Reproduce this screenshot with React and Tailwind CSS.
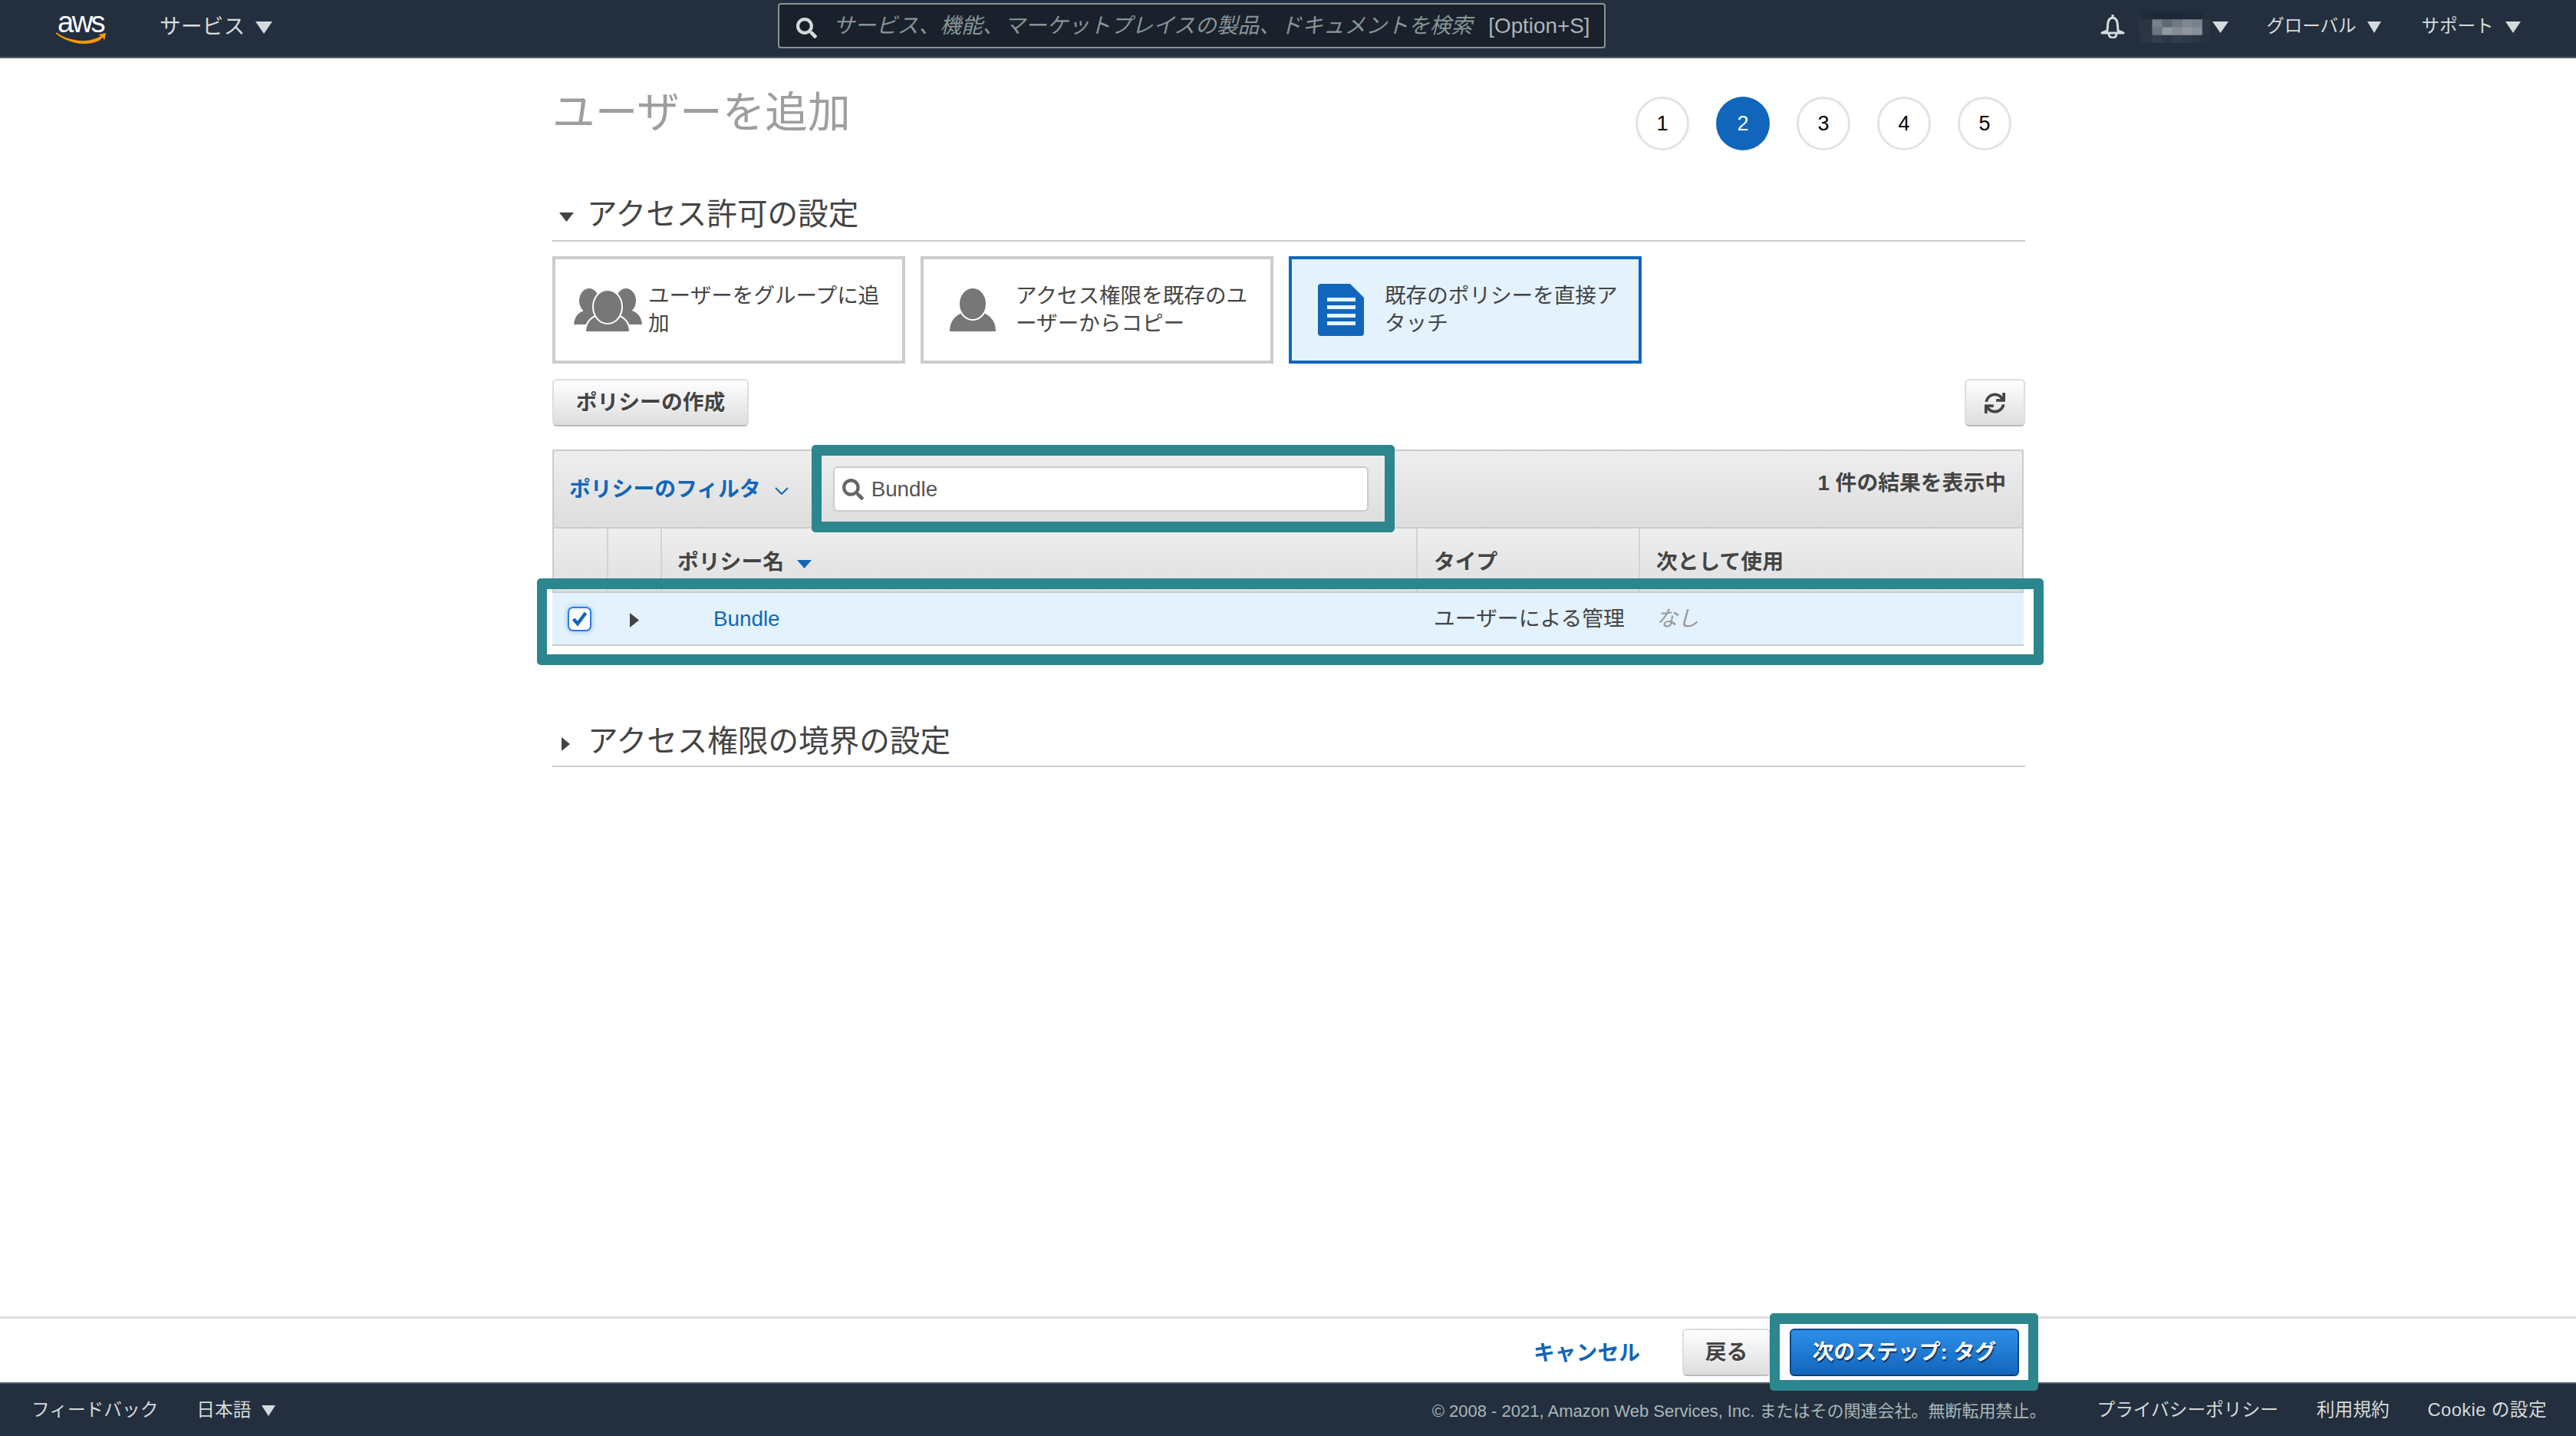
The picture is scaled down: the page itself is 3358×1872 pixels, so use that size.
import { FaSearch, FaSync } from "react-icons/fa"

function Tri({ w, h, dir = "down", className }) {
    const points = dir === "down" ? `0,0 ${w},0 ${w / 2},${h}` : `0,0 ${w},${h / 2} 0,${h}`
    return (
        <svg width={w} height={h} viewBox={`0 0 ${w} ${h}`} className={`shrink-0 ${className}`}>
            <polygon points={points} fill="currentColor" />
        </svg>
    )
}

function AwsLogo() {
    return (
        <div className="w-[66px] h-[40px] relative shrink-0 mt-[4px]">
            <span className="block text-white text-[38px] leading-[24px] tracking-[-2.5px] font-normal pl-[2px] [font-family:'Liberation_Sans',sans-serif]">aws</span>
            <svg width="66" height="15" viewBox="0 0 66 15" className="absolute left-0 top-[25px]">
                <path d="M0 1 C14 12 42 17 60 5 C62 4 60 8 54 11 C38 18 14 13 0 1 Z" fill="#ff9900" stroke="#ff9900" strokeWidth="1.6" />
                <path d="M55 3 L65 1 L63 11 C62 7 60 5 55 3 Z" fill="#ff9900" />
            </svg>
        </div>
    )
}

function Mosaic() {
    const rows = [
        ["#232f3e", "#1f2a38", "#1f2a38", "#1e2937", "#1f2a38", "#1f2a38", "#1f2a38", "#232f3e"],
        ["#2a3544", "#2a3544", "#77808b", "#5f6975", "#6f7883", "#7f8790", "#79818c", "#2a3544"],
        ["#2a3544", "#2a3544", "#6b7480", "#9098a0", "#858c95", "#8f969e", "#868e97", "#2a3544"],
        ["#273240", "#2c3746", "#333e4c", "#2d3846", "#333e4c", "#2f3a49", "#2a3544", "#273240"],
    ]
    return (
        <svg width="93" height="41" viewBox="0 0 96 40" preserveAspectRatio="none" className="shrink-0">
            {rows.map((row, y) => row.map((c, x) => (
                <rect key={`${x}-${y}`} x={x * 13.5 - 9} y={y * 10} width="14" height="10.5" fill={c} />
            )))}
        </svg>
    )
}

function PersonIcon() {
    return (
        <svg width="60" height="56" viewBox="0 0 60 56" className="shrink-0">
            <path d="M0 56 C0 42 8 34 19 31 L41 31 C52 34 60 42 60 56 Z" fill="#777" />
            <ellipse cx="30" cy="20" rx="18" ry="21" fill="#777" stroke="#fff" strokeWidth="2" />
        </svg>
    )
}

function GroupIcon() {
    return (
        <svg width="89" height="57" viewBox="0 0 89 57" className="shrink-0">
            <ellipse cx="20" cy="16" rx="13" ry="16" fill="#777" />
            <ellipse cx="68" cy="16" rx="13" ry="16" fill="#777" />
            <path d="M0 47 C1 35 8 30 16 28 L28 28 L28 47 Z" fill="#777" />
            <path d="M89 47 C88 35 81 30 73 28 L60 28 L60 47 Z" fill="#777" />
            <path d="M15 57 C15 44 23 37 33 34 L55 34 C65 37 73 44 73 57 Z" fill="#777" stroke="#fff" strokeWidth="2" />
            <ellipse cx="44" cy="24" rx="19" ry="22" fill="#777" stroke="#fff" strokeWidth="2" />
        </svg>
    )
}

function DocIcon() {
    return (
        <svg width="60" height="68" viewBox="0 0 60 68" className="shrink-0">
            <path d="M4 0 H42 L60 18 V64 Q60 68 56 68 H4 Q0 68 0 64 V4 Q0 0 4 0 Z" fill="#1166bb" />
            <rect x="12" y="18" width="37" height="5" fill="#e3f2fd" />
            <rect x="12" y="28" width="37" height="5" fill="#e3f2fd" />
            <rect x="12" y="39" width="37" height="5" fill="#e3f2fd" />
            <rect x="12" y="49" width="37" height="5" fill="#e3f2fd" />
        </svg>
    )
}

function BellIcon() {
    return (
        <svg width="34" height="32" viewBox="0 0 34 32" fill="none" stroke="#d5dbdb" strokeWidth="3" className="shrink-0">
            <path d="M17 1 V4 M10 22 C11 16 9 6 17 5 C25 6 23 16 24 22 L31 25 H3 Z" strokeLinejoin="round" />
            <path d="M12 26 C12 33 22 33 22 26" />
        </svg>
    )
}

function Section({ open, title, className }) {
    return (
        <div className={`flex items-center border-b-2 border-[#ccc] text-[39.6px] leading-[40px] text-[#444] ${className}`}>
            {open
                ? <Tri w={19} h={12} className="ml-[9px] mr-[17px] mt-[6px] text-[#444]" />
                : <Tri w={11} h={18} dir="right" className="ml-[12px] mr-[23px] mt-[6px] text-[#444]" />}
            <h2 className="-mt-[1px] mb-[1px]">{title}</h2>
        </div>
    )
}

function ChoiceCard({ icon, text, active, className }) {
    return (
        <div className={`w-[460px] h-[140px] border-4 flex items-center text-[27.6px] leading-[36px] text-[#444] ${active ? "border-[#1166bb] bg-[#e3f2fd]" : "border-[#ccc] bg-white"} ${className}`}>
            {icon}
            <p>{text}</p>
        </div>
    )
}

function Highlight({ className }) {
    return <div className={`absolute z-10 border-x-[13px] border-y-[14px] border-[#2b868d] rounded-[5px] pointer-events-none ${className}`}></div>
}

const btn = "bg-gradient-to-b from-white to-[#ddd] border-2 border-[#ddd] border-b-[#bbb] rounded-[6px] text-[#444] font-bold text-[27.8px] [text-shadow:0_1px_0_#fff]"
const cols = "grid grid-cols-[71px_70px_985px_290px_1fr]"
const navText = "text-[#d5dbdb] text-[23.5px]"

export default function App() {
    const steps = [1, 2, 3, 4, 5]
    return (
        <div className="h-screen flex flex-col bg-white overflow-hidden [font-family:'Liberation_Sans','Noto_Sans_CJK_JP',sans-serif]">
            <header className="h-[76px] shrink-0 bg-[#232f3e] border-b-2 border-[#4f5966] flex items-center pl-[73px] pb-[4px]">
                <AwsLogo />
                <div className="ml-[69px] flex items-center text-[#d5dbdb] text-[27.8px]">
                    <span>サービス</span>
                    <Tri w={22} h={16} className="ml-[14px] mt-[2px]" />
                </div>
                <div className="ml-[659px] w-[1079px] h-[59px] -mt-[3px] shrink-0 bg-[#1a212c] border-2 border-[#879596] rounded-[4px] flex items-center pl-[22px]">
                    <FaSearch size={27} className="text-[#d5dbdb] mt-[6px]" />
                    <span className="ml-[21px] text-[#879596] italic text-[27.8px] whitespace-nowrap">サービス、機能、マーケットプレイスの製品、ドキュメントを検索</span>
                    <span className="ml-[21px] text-[#aab7b8] text-[27.8px] whitespace-nowrap">[Option+S]</span>
                </div>
                <div className="ml-[644px] -mt-[3px]"><BellIcon /></div>
                <div className="ml-[17px]"><Mosaic /></div>
                <Tri w={21} h={15} className="ml-[3px] text-[#d5dbdb]" />
                <span className={`ml-[49px] ${navText}`}>グローバル</span>
                <Tri w={18} h={15} className="ml-[15px] text-[#d5dbdb]" />
                <span className={`ml-[52px] ${navText}`}>サポート</span>
                <Tri w={20} h={15} className="ml-[16px] text-[#d5dbdb]" />
            </header>

            <main className="flex-1 min-h-0 pl-[720px]">
                <div className="w-[1920px]">
                    <div className="mt-[50px] h-[70px] flex justify-between items-start pr-[18px]">
                        <h1 className="-mt-[7px] text-[55.7px] leading-[56px] text-[#9e9e9e]">ユーザーを追加</h1>
                        <div className="flex gap-[35px]">
                            {steps.map(n => (
                                <div key={n} className={`w-[70px] h-[70px] rounded-full flex items-center justify-center text-[27px] ${n === 2 ? "bg-[#1166bb] text-white" : "border-[3px] border-[#e3e3e3] text-black"}`}>{n}</div>
                            ))}
                        </div>
                    </div>

                    <div className="mt-[64px]">
                        <Section open title="アクセス許可の設定" className="pb-[13px]" />
                    </div>

                    <div className="mt-[19px] flex gap-[20px]">
                        <ChoiceCard className="pl-[24px] gap-[8px]" icon={<GroupIcon />} text={<>ユーザーをグループに追<br />加</>} />
                        <ChoiceCard className="pl-[34px] gap-[26px]" icon={<PersonIcon />} text={<>アクセス権限を既存のユ<br />ーザーからコピー</>} />
                        <ChoiceCard className="pl-[34px] gap-[27px]" active icon={<DocIcon />} text={<>既存のポリシーを直接ア<br />タッチ</>} />
                    </div>

                    <div className="mt-[20px] flex justify-between">
                        <button className={`w-[256px] h-[62px] ${btn}`}>ポリシーの作成</button>
                        <button className={`w-[79px] h-[62px] flex items-center justify-center ${btn}`}>
                            <FaSync size={27} />
                        </button>
                    </div>

                    <div className="mt-[30px] relative w-[1918px]">
                        <div className="h-[103px] bg-gradient-to-b from-[#eee] to-[#ddd] border-2 border-[#ccc] flex items-center pl-[20px] pr-[21px]">
                            <span className="text-[#1166bb] font-bold text-[27.8px] whitespace-nowrap">ポリシーのフィルタ</span>
                            <svg width="18" height="10" viewBox="0 0 18 10" fill="none" stroke="#1166bb" strokeWidth="2" className="ml-[18px] mt-[4px]"><path d="M1 1 L9 9 L17 1" /></svg>
                            <div className="ml-[58px] w-[698px] h-[59px] bg-white border-2 border-[#ccc] rounded-[6px] flex items-center pl-[10px]">
                                <FaSearch size={28} className="text-[#666]" />
                                <span className="ml-[10px] text-[#555] text-[27.8px]">Bundle</span>
                            </div>
                            <span className="ml-auto -mt-[16px] text-[#444] font-bold text-[27.8px] whitespace-nowrap">1 件の結果を表示中</span>
                        </div>

                        <div className={`${cols} h-[84px] bg-gradient-to-b from-[#eee] to-[#e0e0e0] border-x-2 border-b-2 border-[#ccc] text-[#444] font-bold text-[27.8px] leading-[36px]`}>
                            <div className="border-r-2 border-[#d3d3d3]"></div>
                            <div className="border-r-2 border-[#d3d3d3]"></div>
                            <div className="border-r-2 border-[#d3d3d3] pl-[20px] pt-[26px] flex items-start">
                                <span>ポリシー名</span>
                                <Tri w={19} h={11} className="ml-[17px] mt-[15px] text-[#1166bb]" />
                            </div>
                            <div className="border-r-2 border-[#d3d3d3] pl-[21px] pt-[26px]">タイプ</div>
                            <div className="pl-[21px] pt-[26px]">次として使用</div>
                        </div>

                        <div className={`${cols} h-[69px] bg-[#e3f2fd] border-b-2 border-[#ccc] items-center text-[27.8px] text-[#444]`}>
                            <div className="pl-[20px]">
                                <div className="w-[31px] h-[32px] bg-white border-2 border-[#2a7de1] rounded-[7px] flex items-center justify-center shadow-[0_0_6px_#7fb5ee]">
                                    <svg width="21" height="21" viewBox="0 0 21 21" fill="none" stroke="#1166bb" strokeWidth="4.5"><path d="M2.5 11 L8 17 L18.5 3" /></svg>
                                </div>
                            </div>
                            <div className="pl-[30px]"><Tri w={12} h={19} dir="right" className="text-[#444] mt-[4px]" /></div>
                            <div className="pl-[69px] text-[#1166bb]">Bundle</div>
                            <div className="pl-[23px] whitespace-nowrap">ユーザーによる管理</div>
                            <div className="pl-[23px] italic text-[#999]">なし</div>
                        </div>

                        <Highlight className="left-[338px] -top-[6px] w-[760px] h-[114px]" />
                        <Highlight className="-left-[20px] top-[168px] w-[1964px] h-[113px]" />
                    </div>

                    <div className="mt-[105px]">
                        <Section title="アクセス権限の境界の設定" className="pb-[11px]" />
                    </div>
                </div>
            </main>

            <div className="h-[85px] shrink-0 border-t-2 border-[#ddd] shadow-[0_-1px_3px_rgba(0,0,0,0.12)] flex justify-end items-start pt-[13px] pr-[726px]">
                <a className="mt-[11px] text-[#1166bb] font-bold text-[27.8px]">キャンセル</a>
                <button className={`ml-[55px] w-[115px] h-[62px] ${btn}`}>戻る</button>
                <div className="ml-[25px] relative">
                    <button className="w-[299px] h-[62px] bg-gradient-to-b from-[#2d8fea] to-[#1166bb] border-2 border-[#0b4a8c] border-b-[#063c78] rounded-[6px] text-white font-bold text-[27.8px] [text-shadow:1px_2px_1px_#0a2a55]">次のステップ: タグ</button>
                    <Highlight className="-left-[26px] -right-[25px] -top-[20px] -bottom-[19px]" />
                </div>
            </div>

            <footer className="h-[70px] shrink-0 bg-[#232f3e] border-t-2 border-[#4f5966] flex items-center pl-[41px] pr-[38px] pt-[2px] text-[#d5dbdb] text-[23.7px]">
                <span>フィードバック</span>
                <span className="ml-[50px]">日本語</span>
                <Tri w={18} h={14} className="ml-[14px]" />
                <span className="ml-auto text-[#aab7b8] text-[22px] whitespace-nowrap">© 2008 - 2021, Amazon Web Services, Inc. またはその関連会社。無断転用禁止。</span>
                <span className="ml-[66px]">プライバシーポリシー</span>
                <span className="ml-[50px]">利用規約</span>
                <span className="ml-[50px] tracking-[0.4px]">Cookie の設定</span>
            </footer>
        </div>
    )
}
